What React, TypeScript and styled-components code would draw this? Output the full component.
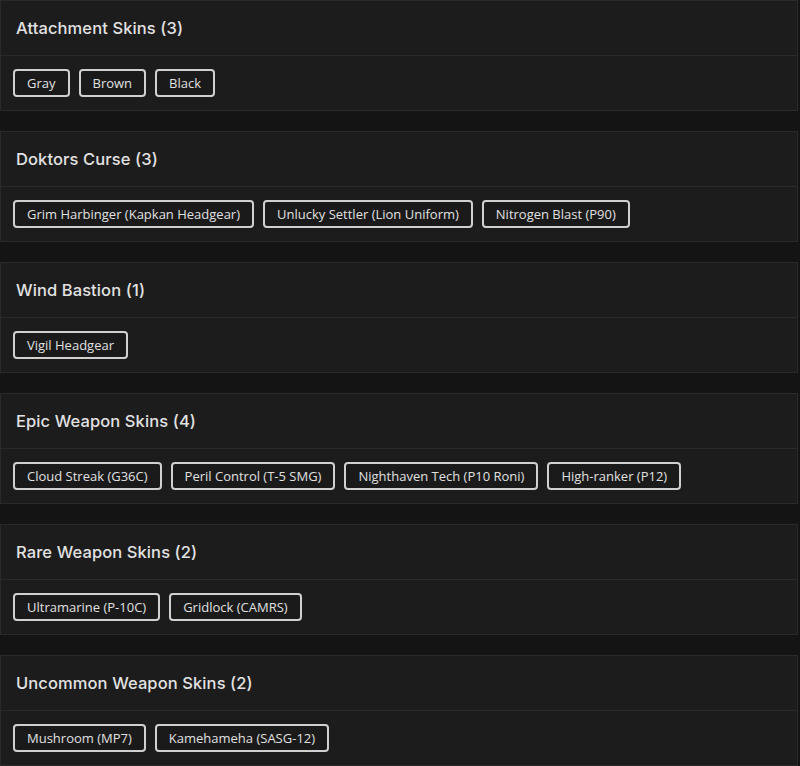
import React from "react";
import styled, { createGlobalStyle } from "styled-components";

const Global = createGlobalStyle`
  html, body {
    margin: 0;
    padding: 0;
    background: #141414;
  }
  body {
    font-family: "Open Sans", "DejaVu Sans", sans-serif;
    color: #e4e4e4;
  }
`;

const Page = styled.div`
  display: flex;
  flex-direction: column;
  gap: 20px;
  width: 798px;
`;

const Card = styled.section`
  background: #1c1c1c;
  border: 1px solid #2a2a2a;
`;

const Header = styled.div`
  height: 54px;
  display: flex;
  align-items: center;
  padding: 0 15px;
  border-bottom: 1px solid #2a2a2a;
`;

const Title = styled.h3`
  margin: 0;
  font-family: Inter, "Open Sans", sans-serif;
  font-size: 16.5px;
  font-weight: 500;
  color: #e2e2e2;
  letter-spacing: 0.1px;
`;

const Body = styled.div`
  display: flex;
  flex-wrap: wrap;
  gap: 9px;
  padding: 13px 12px;
`;

const Tag = styled.button`
  height: 28px;
  box-sizing: border-box;
  padding: 0 12px;
  background: #1a1a1a;
  border: 2px solid #d0d0d0;
  border-radius: 4px;
  color: #e0e0e0;
  font-family: "Open Sans", "DejaVu Sans", sans-serif;
  font-size: 13px;
  line-height: 1;
`;

const groups: { title: string; items: string[] }[] = [
  { title: "Attachment Skins", items: ["Gray", "Brown", "Black"] },
  {
    title: "Doktors Curse",
    items: [
      "Grim Harbinger (Kapkan Headgear)",
      "Unlucky Settler (Lion Uniform)",
      "Nitrogen Blast (P90)",
    ],
  },
  { title: "Wind Bastion", items: ["Vigil Headgear"] },
  {
    title: "Epic Weapon Skins",
    items: [
      "Cloud Streak (G36C)",
      "Peril Control (T-5 SMG)",
      "Nighthaven Tech (P10 Roni)",
      "High-ranker (P12)",
    ],
  },
  { title: "Rare Weapon Skins", items: ["Ultramarine (P-10C)", "Gridlock (CAMRS)"] },
  {
    title: "Uncommon Weapon Skins",
    items: ["Mushroom (MP7)", "Kamehameha (SASG-12)"],
  },
];

export default function App() {
  return (
    <>
      <Global />
      <Page>
        {groups.map((g) => (
          <Card key={g.title}>
            <Header>
              <Title>
                {g.title} ({g.items.length})
              </Title>
            </Header>
            <Body>
              {g.items.map((it) => (
                <Tag key={it}>{it}</Tag>
              ))}
            </Body>
          </Card>
        ))}
      </Page>
    </>
  );
}
